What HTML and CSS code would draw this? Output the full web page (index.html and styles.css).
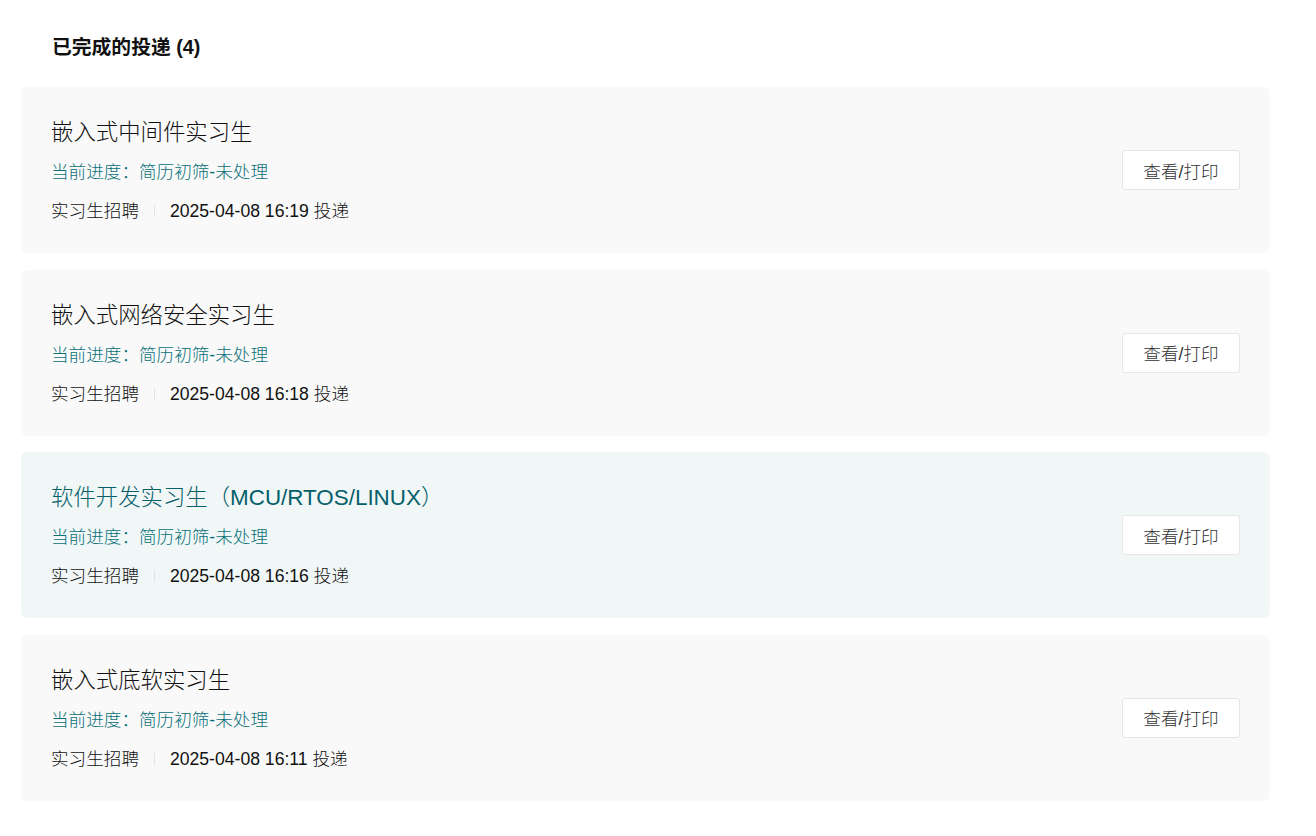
FILE: index.html
```html
<!DOCTYPE html>
<html lang="zh-CN">
<head>
<meta charset="utf-8">
<title>已完成的投递</title>
<link rel="stylesheet" href="styles.css">
</head>
<body>
<div class="page">
  <h2 class="section-title">已完成的投递 (4)</h2>
  <ul class="list">
    <li class="card">
      <div class="info">
        <div class="job">嵌入式中间件实习生</div>
        <div class="progress">当前进度：简历初筛-未处理</div>
        <div class="meta"><span>实习生招聘</span><i class="sep"></i><span>2025-04-08 16:19 投递</span></div>
      </div>
      <button class="btn">查看/打印</button>
    </li>
    <li class="card">
      <div class="info">
        <div class="job">嵌入式网络安全实习生</div>
        <div class="progress">当前进度：简历初筛-未处理</div>
        <div class="meta"><span>实习生招聘</span><i class="sep"></i><span>2025-04-08 16:18 投递</span></div>
      </div>
      <button class="btn">查看/打印</button>
    </li>
    <li class="card active">
      <div class="info">
        <div class="job">软件开发实习生（MCU/RTOS/LINUX）</div>
        <div class="progress">当前进度：简历初筛-未处理</div>
        <div class="meta"><span>实习生招聘</span><i class="sep"></i><span>2025-04-08 16:16 投递</span></div>
      </div>
      <button class="btn">查看/打印</button>
    </li>
    <li class="card">
      <div class="info">
        <div class="job">嵌入式底软实习生</div>
        <div class="progress">当前进度：简历初筛-未处理</div>
        <div class="meta"><span>实习生招聘</span><i class="sep"></i><span>2025-04-08 16:11 投递</span></div>
      </div>
      <button class="btn">查看/打印</button>
    </li>
  </ul>
</div>
</body>
</html>
```
FILE: styles.css
```css
html, body {
  margin: 0;
  padding: 0;
  background: #ffffff;
}
body {
  font-family: "Liberation Sans", Arial, "Noto Sans CJK SC", sans-serif;
  color: #222;
}
.page {
  padding: 33px 46px 0 21px;
}
.section-title {
  margin: 0 0 26px 31px;
  font-size: 19.8px;
  line-height: 28px;
  font-weight: bold;
  color: #111;
}
.list {
  list-style: none;
  margin: 0;
  padding: 0;
  display: flex;
  flex-direction: column;
  gap: 16.5px;
}
.card {
  display: flex;
  align-items: center;
  justify-content: space-between;
  background: #f9f9f9;
  border-radius: 6px;
  padding: 32px 30px 29px 30px;
}
.card.active {
  background: #f1f7f7;
}
.info {
  display: flex;
  flex-direction: column;
}
.job {
  font-size: 22.4px;
  line-height: 28px;
  color: #111;
  font-weight: 300;
}
.card.active .job {
  color: #05606a;
}
.progress {
  margin-top: 12px;
  font-size: 17.6px;
  line-height: 26px;
  color: #087078;
  font-weight: 300;
}
.meta {
  margin-top: 13px;
  display: flex;
  align-items: center;
  font-size: 17.6px;
  line-height: 26px;
  color: #111;
  font-weight: 300;
}
.sep {
  display: inline-block;
  width: 1px;
  height: 12px;
  background: #e2e2e2;
  margin: 0 15px 0 15px;
}
.btn {
  width: 118px;
  height: 40px;
  margin-bottom: 3px;
  background: #ffffff;
  border: 1px solid #e6e6e6;
  border-radius: 3px;
  font-family: inherit;
  font-size: 17.6px;
  font-weight: 300;
  color: #333;
  padding: 0;
  cursor: pointer;
}
```
